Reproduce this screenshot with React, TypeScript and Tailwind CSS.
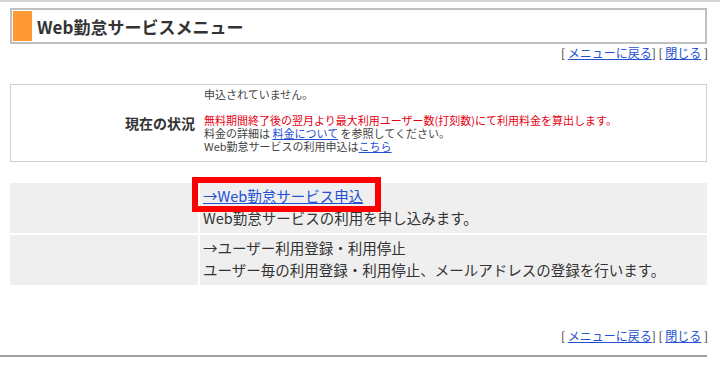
const font = { fontFamily: '"Noto Sans CJK JP", "Noto Sans", sans-serif' };

function NavLinks() {
  return (
    <div className="w-[708px] text-right text-[12px] leading-[14px] text-[#333]">
      [ <a className="text-[#2450d4] underline">メニューに戻る</a>] [{' '}
      <a className="text-[#2450d4] underline">閉じる</a> ]
    </div>
  );
}

function MenuRow({ title, desc, link }: { title: string; desc: string; link?: boolean }) {
  return (
    <div className="flex h-[50px] gap-[2px]">
      <div className="w-[188px] bg-[#efefef]" />
      <div className="flex-1 bg-[#efefef] pl-[3px] pt-[2px] text-[14.5px] leading-[22px] text-[#333]">
        {link ? (
          <a className="text-[#2450d4] underline">{title}</a>
        ) : (
          <div>{title}</div>
        )}
        <div>{desc}</div>
      </div>
    </div>
  );
}

export default function App() {
  return (
    <div className="relative w-[720px] h-[365px] bg-white overflow-hidden" style={font}>
      <div className="border-t-2 border-[#d4d4d4]" />

      {/* Title */}
      <div className="mt-[6px] ml-[10px] w-[697px] h-[36px] border-2 border-[#c0c0c0] p-[1px] flex items-center">
        <div className="w-[19px] h-[30px] bg-[#ff9933]" />
        <div className="ml-[5px] text-[17px] font-bold text-[#333] leading-none">Web勤怠サービスメニュー</div>
      </div>

      <div className="mt-[2px]">
        <NavLinks />
      </div>

      {/* Status */}
      <div className="mt-[24px] ml-[10px] w-[697px] h-[78px] border border-[#d0d0d0] flex">
        <div className="w-[187px] flex items-center justify-end pr-[3px] text-[14px] font-bold text-[#333]">
          現在の状況
        </div>
        <div className="pl-[6px] pt-[3px] text-[11px] leading-[13px] text-[#444]">
          <div>申込されていません。</div>
          <div className="h-[13px]" />
          <div className="text-[#e60012]">無料期間終了後の翌月より最大利用ユーザー数(打刻数)にて利用料金を算出します。</div>
          <div>
            料金の詳細は <a className="text-[#2450d4] underline">料金について</a> を参照してください。
          </div>
          <div>
            Web勤怠サービスの利用申込は<a className="text-[#2450d4] underline">こちら</a>
          </div>
        </div>
      </div>

      {/* Menu */}
      <div className="mt-[21px] ml-[10px] w-[697px] flex flex-col gap-[2px]">
        <MenuRow link title="→Web勤怠サービス申込" desc="Web勤怠サービスの利用を申し込みます。" />
        <MenuRow
          title="→ユーザー利用登録・利用停止"
          desc="ユーザー毎の利用登録・利用停止、メールアドレスの登録を行います。"
        />
      </div>

      <div className="mt-[44px]">
        <NavLinks />
      </div>

      <div className="mt-[12px] w-[707px] border-t-2 border-[#a0a0a0]" />

      {/* highlight annotation */}
      <div className="absolute left-[192px] top-[177px] w-[189px] h-[35px] border-[6px] border-[#ff0000]" />
    </div>
  );
}
